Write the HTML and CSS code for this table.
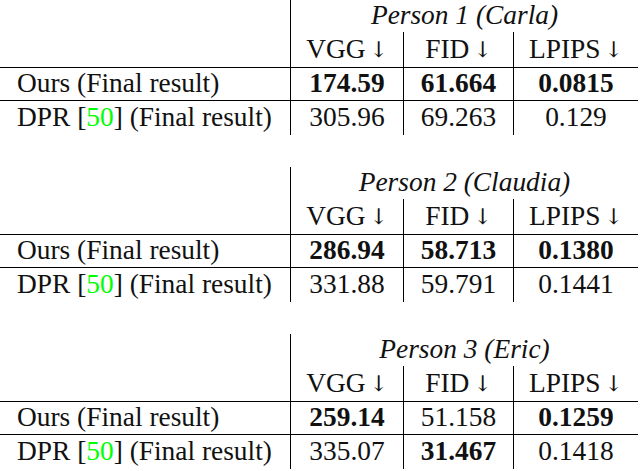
FILE: index.html
```html
<!DOCTYPE html>
<html>
<head>
<meta charset="utf-8">
<link rel="stylesheet" href="styles.css">
</head>
<body>
<div class="page">
  <div class="block">
    <div class="cell label-head"></div>
    <div class="cell title">Person 1 (Carla)</div>
    <div class="cell label-blank"></div>
    <div class="cell metric sep">VGG<span class="arr">↓</span></div>
    <div class="cell metric sep">FID<span class="arr">↓</span></div>
    <div class="cell metric">LPIPS<span class="arr">↓</span></div>
    <div class="cell label top">Ours (Final result)</div>
    <div class="cell num sep top b">174.59</div>
    <div class="cell num sep top b">61.664</div>
    <div class="cell num top b">0.0815</div>
    <div class="cell label top">DPR [<span class="cite">50</span>] (Final result)</div>
    <div class="cell num sep top">305.96</div>
    <div class="cell num sep top">69.263</div>
    <div class="cell num top">0.129</div>
  </div>
  <div class="block">
    <div class="cell label-head"></div>
    <div class="cell title">Person 2 (Claudia)</div>
    <div class="cell label-blank"></div>
    <div class="cell metric sep">VGG<span class="arr">↓</span></div>
    <div class="cell metric sep">FID<span class="arr">↓</span></div>
    <div class="cell metric">LPIPS<span class="arr">↓</span></div>
    <div class="cell label top">Ours (Final result)</div>
    <div class="cell num sep top b">286.94</div>
    <div class="cell num sep top b">58.713</div>
    <div class="cell num top b">0.1380</div>
    <div class="cell label top">DPR [<span class="cite">50</span>] (Final result)</div>
    <div class="cell num sep top">331.88</div>
    <div class="cell num sep top">59.791</div>
    <div class="cell num top">0.1441</div>
  </div>
  <div class="block">
    <div class="cell label-head"></div>
    <div class="cell title">Person 3 (Eric)</div>
    <div class="cell label-blank"></div>
    <div class="cell metric sep">VGG<span class="arr">↓</span></div>
    <div class="cell metric sep">FID<span class="arr">↓</span></div>
    <div class="cell metric">LPIPS<span class="arr">↓</span></div>
    <div class="cell label top">Ours (Final result)</div>
    <div class="cell num sep top b">259.14</div>
    <div class="cell num sep top">51.158</div>
    <div class="cell num top b">0.1259</div>
    <div class="cell label top">DPR [<span class="cite">50</span>] (Final result)</div>
    <div class="cell num sep top">335.07</div>
    <div class="cell num sep top b">31.467</div>
    <div class="cell num top">0.1418</div>
  </div>
</div>
</body>
</html>
```
FILE: styles.css
```css
html, body {
  margin: 0;
  padding: 0;
  background: #fff;
}
.page {
  display: flex;
  flex-direction: column;
  gap: 32px;
  width: 640px;
  font-family: "Liberation Serif", "Times New Roman", serif;
  font-size: 27.4px;
  color: #111;
}
.block {
  display: grid;
  grid-template-columns: 291px 113px 110px 124px;
  grid-template-rows: 32px 35px 33px 35px;
  width: 638px;
}
.cell {
  display: flex;
  align-items: center;
  justify-content: center;
  box-sizing: border-box;
  white-space: nowrap;
  line-height: 1;
}
.label-head {
  grid-column: 1;
  grid-row: 1;
  border-right: 1px solid #000;
}
.label-blank {
  border-right: 1px solid #000;
}
.title {
  grid-column: 2 / span 3;
  font-style: italic;
  padding-top: 0;
}
.label {
  justify-content: flex-start;
  padding-left: 17px;
  border-right: 1px solid #000;
}
.sep {
  border-right: 1px solid #000;
}
.top {
  border-top: 1px solid #000;
}
.b {
  font-weight: bold;
}
.arr {
  margin-left: 4px;
  font-family: "DejaVu Serif", serif;
  font-size: 0.8em;
}
.cite {
  color: #00ff00;
}
```
